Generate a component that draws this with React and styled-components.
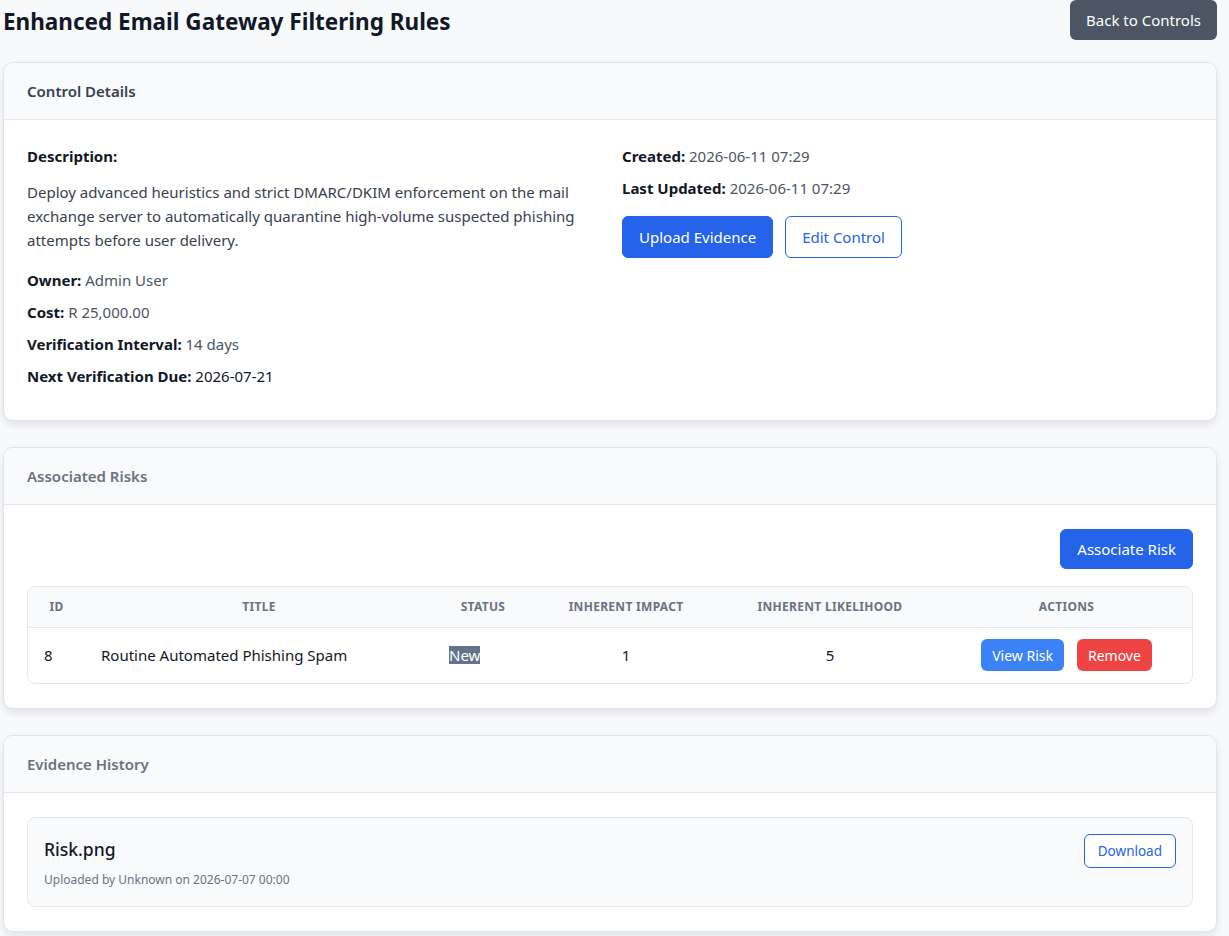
import React from "react";
import styled, { createGlobalStyle } from "styled-components";

const GlobalStyle = createGlobalStyle`
  * { box-sizing: border-box; }
  body {
    margin: 0;
    background: #f8f9fb;
    font-family: "Noto Sans", "Open Sans", Arial, sans-serif;
    color: #111827;
  }
`;

const risks = [
  { id: 8, title: "Routine Automated Phishing Spam", status: "New", impact: 1, likelihood: 5 },
];

const evidence = [
  { name: "Risk.png", by: "Unknown", at: "2026-07-07 00:00" },
];

const App = () => {
  return (
    <Page>
      <GlobalStyle />
      <TopBar>
        <PageTitle>Enhanced Email Gateway Filtering Rules</PageTitle>
        <BackButton>Back to Controls</BackButton>
      </TopBar>

      {/* 통제 상세 */}
      <Card>
        <CardHeader $dark>Control Details</CardHeader>
        <DetailsBody>
          <Column>
            <Label>Description:</Label>
            <Paragraph>
              Deploy advanced heuristics and strict DMARC/DKIM enforcement on the mail exchange server
              to automatically quarantine high-volume suspected phishing attempts before user delivery.
            </Paragraph>
            <Field>
              <b>Owner:</b> Admin User
            </Field>
            <Field>
              <b>Cost:</b> R 25,000.00
            </Field>
            <Field>
              <b>Verification Interval:</b> 14 days
            </Field>
            <Field $strong>
              <b>Next Verification Due:</b> 2026-07-21
            </Field>
          </Column>
          <Column>
            <Field>
              <b>Created:</b> 2026-06-11 07:29
            </Field>
            <Field>
              <b>Last Updated:</b> 2026-06-11 07:29
            </Field>
            <ButtonRow>
              <Button $variant="primary">Upload Evidence</Button>
              <Button $variant="outline">Edit Control</Button>
            </ButtonRow>
          </Column>
        </DetailsBody>
      </Card>

      {/* 연관 리스크 */}
      <Card>
        <CardHeader>Associated Risks</CardHeader>
        <CardBody>
          <ActionBar>
            <Button $variant="primary" $size="md">Associate Risk</Button>
          </ActionBar>
          <TableWrap>
            <Table>
              <colgroup>
                <col style={{ width: 57 }} />
                <col style={{ width: 348 }} />
                <col style={{ width: 100 }} />
                <col style={{ width: 186 }} />
                <col style={{ width: 222 }} />
                <col />
              </colgroup>
              <thead>
                <tr>
                  <Th>ID</Th>
                  <Th>Title</Th>
                  <Th>Status</Th>
                  <Th>Inherent Impact</Th>
                  <Th>Inherent Likelihood</Th>
                  <Th>Actions</Th>
                </tr>
              </thead>
              <tbody>
                {risks.map((r) => (
                  <tr key={r.id}>
                    <Td>{r.id}</Td>
                    <Td>{r.title}</Td>
                    <Td>
                      <StatusBadge>{r.status}</StatusBadge>
                    </Td>
                    <Td $center>{r.impact}</Td>
                    <Td $center>{r.likelihood}</Td>
                    <Td $center>
                      <SmallButtons>
                        <SmallButton $color="#3b82f6">View Risk</SmallButton>
                        <SmallButton $color="#ef4444">Remove</SmallButton>
                      </SmallButtons>
                    </Td>
                  </tr>
                ))}
              </tbody>
            </Table>
          </TableWrap>
        </CardBody>
      </Card>

      {/* 증적 이력 */}
      <Card>
        <CardHeader>Evidence History</CardHeader>
        <CardBody>
          {evidence.map((e) => (
            <EvidenceItem key={e.name}>
              <div>
                <FileName>{e.name}</FileName>
                <FileMeta>
                  Uploaded by {e.by} on {e.at}
                </FileMeta>
              </div>
              <DownloadButton>Download</DownloadButton>
            </EvidenceItem>
          ))}
        </CardBody>
      </Card>
    </Page>
  );
};
export default App;

const Page = styled.div`
  padding: 0 12px 8px 3px;
  display: flex;
  flex-direction: column;
  gap: 26px;
`;

const TopBar = styled.div`
  display: flex;
  justify-content: space-between;
  align-items: flex-start;
  margin-bottom: -4px;
`;

const PageTitle = styled.h1`
  margin: 6px 0 0;
  font-size: 22.5px;
  font-weight: 700;
  color: #111827;
  line-height: 32px;
`;

const BackButton = styled.button`
  height: 40px;
  padding: 0 16px;
  border: none;
  border-radius: 6px;
  background: #4b5563;
  color: #fff;
  font-family: inherit;
  font-size: 15px;
`;

const Card = styled.section`
  background: #fff;
  border: 1px solid #e1e4ea;
  border-radius: 10px;
  box-shadow: 0 4px 8px rgba(0, 0, 0, 0.09);
  overflow: hidden;
`;

const CardHeader = styled.div`
  height: 57px;
  display: flex;
  align-items: center;
  padding: 0 23px;
  background: #f9fafb;
  border-bottom: 1px solid #e5e7eb;
  font-size: 15px;
  font-weight: 600;
  color: ${(p) => (p.$dark ? "#374151" : "#6b7280")};
`;

const CardBody = styled.div`
  padding: 24px 23px;
`;

const DetailsBody = styled(CardBody)`
  display: grid;
  grid-template-columns: 1fr 1fr;
  gap: 24px;
`;

const Column = styled.div`
  display: flex;
  flex-direction: column;
  align-items: flex-start;
`;

const Label = styled.div`
  font-weight: 700;
  font-size: 15px;
  line-height: 24px;
  margin-bottom: 12px;
`;

const Paragraph = styled.p`
  margin: 0 0 16px;
  font-size: 15px;
  line-height: 24px;
  color: #374151;
`;

const Field = styled.div`
  font-size: 15px;
  line-height: 24px;
  margin-bottom: 8px;
  color: ${(p) => (p.$strong ? "#111827" : "#4b5563")};

  & b {
    color: #111827;
  }
`;

const ButtonRow = styled.div`
  display: flex;
  gap: 12px;
  margin-top: 8px;
`;

const Button = styled.button`
  height: ${(p) => (p.$size === "md" ? "40px" : "42px")};
  padding: 0 16px;
  border-radius: 6px;
  font-family: inherit;
  font-size: 15px;
  border: 1px solid #2563eb;
  background: ${(p) => (p.$variant === "primary" ? "#2563eb" : "#fff")};
  color: ${(p) => (p.$variant === "primary" ? "#fff" : "#2563eb")};
`;

const ActionBar = styled.div`
  display: flex;
  justify-content: flex-end;
  margin: 0 0 17px;
`;

const TableWrap = styled.div`
  border: 1px solid #e5e7eb;
  border-radius: 8px;
  overflow: hidden;
`;

const Table = styled.table`
  width: 100%;
  border-collapse: collapse;
  table-layout: fixed;
`;

const Th = styled.th`
  height: 40px;
  background: #f9fafb;
  border-bottom: 1px solid #e5e7eb;
  text-align: center;
  font-size: 12px;
  font-weight: 700;
  letter-spacing: 0.025em;
  text-transform: uppercase;
  color: #6b7280;
  padding: 0 8px;
`;

const Td = styled.td`
  height: 56px;
  padding: 0 16px;
  font-size: 15px;
  color: #111827;
  text-align: ${(p) => (p.$center ? "center" : "left")};
`;

const StatusBadge = styled.span`
  background: #64748b;
  color: #fff;
  padding: 0;
  line-height: 18px;
  display: inline-block;
`;

const SmallButtons = styled.div`
  display: inline-flex;
  gap: 13px;
`;

const SmallButton = styled.button`
  height: 32px;
  padding: 0 11px;
  border: none;
  border-radius: 6px;
  background: ${(p) => p.$color};
  color: #fff;
  font-family: inherit;
  font-size: 14px;
`;

const EvidenceItem = styled.div`
  display: flex;
  justify-content: space-between;
  align-items: flex-start;
  padding: 16px 16px 16px;
  background: #f9fafb;
  border: 1px solid #e5e7eb;
  border-radius: 8px;
`;

const FileName = styled.div`
  font-size: 17.5px;
  font-weight: 500;
  line-height: 30px;
  margin-bottom: 6px;
  color: #111827;
`;

const FileMeta = styled.div`
  font-size: 12px;
  line-height: 20px;
  color: #6b7280;
`;

const DownloadButton = styled.button`
  height: 34px;
  padding: 0 13px;
  border: 1px solid #2563eb;
  border-radius: 6px;
  background: #fff;
  color: #2563eb;
  font-family: inherit;
  font-size: 13.5px;
`;
